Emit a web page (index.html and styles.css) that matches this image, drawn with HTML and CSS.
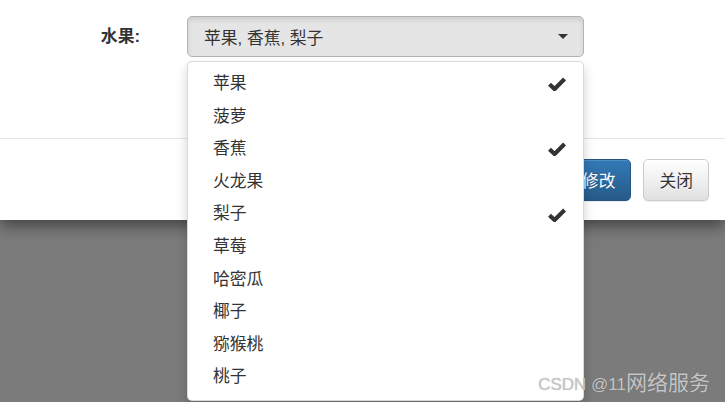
FILE: index.html
```html
<!DOCTYPE html>
<html lang="zh-CN">
<head>
    <meta charset="UTF-8">
    <title>编辑水果</title>
    <link rel="stylesheet" href="styles.css">
</head>
<body>
    <div class="modal">
        <div class="modal-body">
            <div class="form-row">
                <label class="control-label">水果:</label>
                <div class="select-wrap">
                    <button type="button" class="select-btn">
                        <span class="select-text">苹果, 香蕉, 梨子</span>
                        <span class="caret"></span>
                    </button>
                    <ul class="dropdown-menu">
                        <li class="selected"><span>苹果</span><svg class="check" viewBox="0 0 18 14"><path d="M1.5 7.2 L6.6 12 L16.6 2"/></svg></li>
                        <li><span>菠萝</span></li>
                        <li class="selected"><span>香蕉</span><svg class="check" viewBox="0 0 18 14"><path d="M1.5 7.2 L6.6 12 L16.6 2"/></svg></li>
                        <li><span>火龙果</span></li>
                        <li class="selected"><span>梨子</span><svg class="check" viewBox="0 0 18 14"><path d="M1.5 7.2 L6.6 12 L16.6 2"/></svg></li>
                        <li><span>草莓</span></li>
                        <li><span>哈密瓜</span></li>
                        <li><span>椰子</span></li>
                        <li><span>猕猴桃</span></li>
                        <li><span>桃子</span></li>
                    </ul>
                </div>
            </div>
        </div>
        <div class="modal-footer">
            <button type="button" class="btn btn-primary">确认修改</button>
            <button type="button" class="btn btn-default">关闭</button>
        </div>
    </div>

    <div class="watermark"><span class="wm-latin">CSDN @11</span><span class="wm-cjk">网络服务</span></div>
</body>
</html>
```

FILE: styles.css
```css
body {
    margin: 0;
    height: 402px;
    overflow: hidden;
    background: #7b7b7b;
    font-family: "Liberation Sans", "Noto Sans CJK SC", sans-serif;
    font-size: 16.8px;
    color: #333333;
    position: relative;
}

.modal {
    background: #ffffff;
    height: 220px;
    box-shadow: 0 5px 15px rgba(0, 0, 0, 0.5);
    display: flex;
    flex-direction: column;
    position: relative;
    z-index: 1;
}

.modal-body {
    height: 138px;
    box-sizing: border-box;
    padding-top: 16px;
}

.form-row {
    display: flex;
    align-items: center;
}

.control-label {
    width: 140px;
    margin-right: 47px;
    text-align: right;
    font-weight: bold;
    line-height: 41px;
}

.select-wrap {
    position: relative;
    width: 397px;
}

.select-btn {
    width: 100%;
    height: 41px;
    display: flex;
    align-items: center;
    justify-content: space-between;
    padding: 0 15px 0 16px;
    background: #e5e5e5;
    border: 1px solid #b3b3b3;
    border-radius: 5px;
    box-shadow: inset 0 3px 5px rgba(0, 0, 0, 0.1);
    font-family: inherit;
    font-size: 16.8px;
    color: #333333;
}

.caret {
    width: 0;
    height: 0;
    border-top: 5px solid #333333;
    border-left: 5px solid transparent;
    border-right: 5px solid transparent;
}

.dropdown-menu {
    position: absolute;
    top: 45px;
    left: 0;
    width: 100%;
    box-sizing: border-box;
    margin: 0;
    padding: 6px 0;
    list-style: none;
    background: #ffffff;
    border: 1px solid rgba(0, 0, 0, 0.15);
    border-radius: 5px;
    box-shadow: 0 6px 12px rgba(0, 0, 0, 0.175);
    z-index: 5;
}

.dropdown-menu li {
    height: 32.6px;
    line-height: 32.6px;
    display: flex;
    align-items: center;
    justify-content: space-between;
    padding: 0 17px 0 25px;
}

.check {
    width: 18px;
    height: 14px;
    fill: none;
    stroke: #333333;
    stroke-width: 4.2;
    stroke-linejoin: miter;
}

.modal-footer {
    flex: 1;
    border-top: 1px solid #e5e5e5;
    display: flex;
    justify-content: flex-end;
    align-items: center;
    gap: 12px;
    padding-right: 16px;
}

.btn {
    height: 42px;
    padding: 0 15px;
    border-radius: 5px;
    font-family: inherit;
    font-size: 16.8px;
    box-shadow: inset 0 1px 0 rgba(255, 255, 255, 0.15), 0 1px 1px rgba(0, 0, 0, 0.075);
}

.btn-primary {
    color: #ffffff;
    background: linear-gradient(to bottom, #337ab7 0, #265a88 100%);
    border: 1px solid #245580;
    text-shadow: 0 -1px 0 rgba(0, 0, 0, 0.2);
}

.btn-default {
    color: #333333;
    background: linear-gradient(to bottom, #ffffff 0, #e0e0e0 100%);
    border: 1px solid #cccccc;
    text-shadow: 0 1px 0 #ffffff;
}

.watermark {
    position: absolute;
    right: 15px;
    bottom: 6px;
    z-index: 10;
    color: #c6c6c6;
    text-shadow: 0 0 1px rgba(0, 0, 0, 0.25);
    white-space: nowrap;
}

.wm-latin {
    font-size: 17px;
}

.wm-cjk {
    font-size: 21px;
}
```
